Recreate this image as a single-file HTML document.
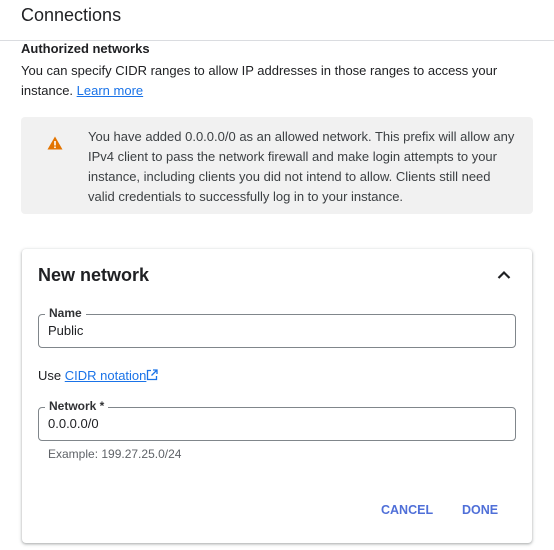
<!DOCTYPE html>
<html><head><style>
*{margin:0;padding:0;box-sizing:border-box}
body{width:554px;height:550px;background:#fff;font-family:"Liberation Sans",sans-serif;color:#202124;position:relative;overflow:hidden}
.a{position:absolute;white-space:nowrap}
.t13{font-size:13px}
a{color:#1a73e8;text-decoration:underline}
.field{position:absolute;left:38px;width:478px;height:34px;border:1px solid #80868b;border-radius:4px}
.lab{position:absolute;left:6px;top:-9px;background:#fff;padding:0 4px;font-size:12px;font-weight:bold;color:#303134}
.val{position:absolute;left:9px;top:8px;font-size:13px}
</style></head><body>
<div class="a" style="left:21px;top:5px;font-size:18px;color:#202124">Connections</div>
<div style="position:absolute;left:0;top:40px;width:554px;height:1px;background:#dadce0"></div>
<div class="a t13" style="left:21px;top:41px;font-weight:bold">Authorized networks</div>
<div class="a t13" style="left:21px;top:63px">You can specify CIDR ranges to allow IP addresses in those ranges to access your</div>
<div class="a t13" style="left:21px;top:83px">instance. <a>Learn more</a></div>
<div style="position:absolute;left:21px;top:117px;width:512px;height:97px;background:#f1f1f1;border-radius:4px"></div>
<svg class="a" style="left:47px;top:136px" width="16" height="14" viewBox="0 0 16 14"><path d="M8 0.5L15.5 13.5H0.5Z" fill="#e37400"/><rect x="7.2" y="5" width="1.6" height="4.5" fill="#fff"/><rect x="7.2" y="10.5" width="1.6" height="1.6" fill="#fff"/></svg>
<div class="a t13" style="left:88px;top:127px;line-height:20px;color:#3c4043">You have added 0.0.0.0/0 as an allowed network. This prefix will allow any<br>IPv4 client to pass the network firewall and make login attempts to your<br>instance, including clients you did not intend to allow. Clients still need<br>valid credentials to successfully log in to your instance.</div>
<div style="position:absolute;left:22px;top:249px;width:510px;height:294px;background:#fff;border-radius:4px;box-shadow:0 1px 2px rgba(60,64,67,.3),0 1px 3px 1px rgba(60,64,67,.15)"></div>
<div class="a" style="left:38px;top:265px;font-size:18px;font-weight:bold;color:#202124">New network</div>
<svg class="a" style="left:496px;top:269px" width="16" height="12" viewBox="0 0 16 12"><path d="M2.5 9L8 3.5L13.5 9" fill="none" stroke="#202124" stroke-width="2.2"/></svg>
<div class="field" style="top:314px"><span class="lab">Name</span><span class="val">Public</span></div>
<div class="a t13" style="left:38px;top:368px">Use <a>CIDR notation</a></div>
<svg class="a" style="left:146px;top:369px" width="12" height="12" viewBox="0 0 12 12"><path d="M5 1.5H1.5V10.5H10.5V7M7 1H11V5M11 1L5.5 6.5" fill="none" stroke="#1a73e8" stroke-width="1.3"/></svg>
<div class="field" style="top:407px"><span class="lab">Network *</span><span class="val">0.0.0.0/0</span></div>
<div class="a" style="left:48px;top:447px;font-size:12px;color:#5f6368">Example: 199.27.25.0/24</div>
<div class="a" style="left:381px;top:503px;font-size:12.5px;font-weight:600;color:#4f6fd8">CANCEL</div>
<div class="a" style="left:462px;top:503px;font-size:12.5px;font-weight:600;color:#4f6fd8">DONE</div>
</body></html>
